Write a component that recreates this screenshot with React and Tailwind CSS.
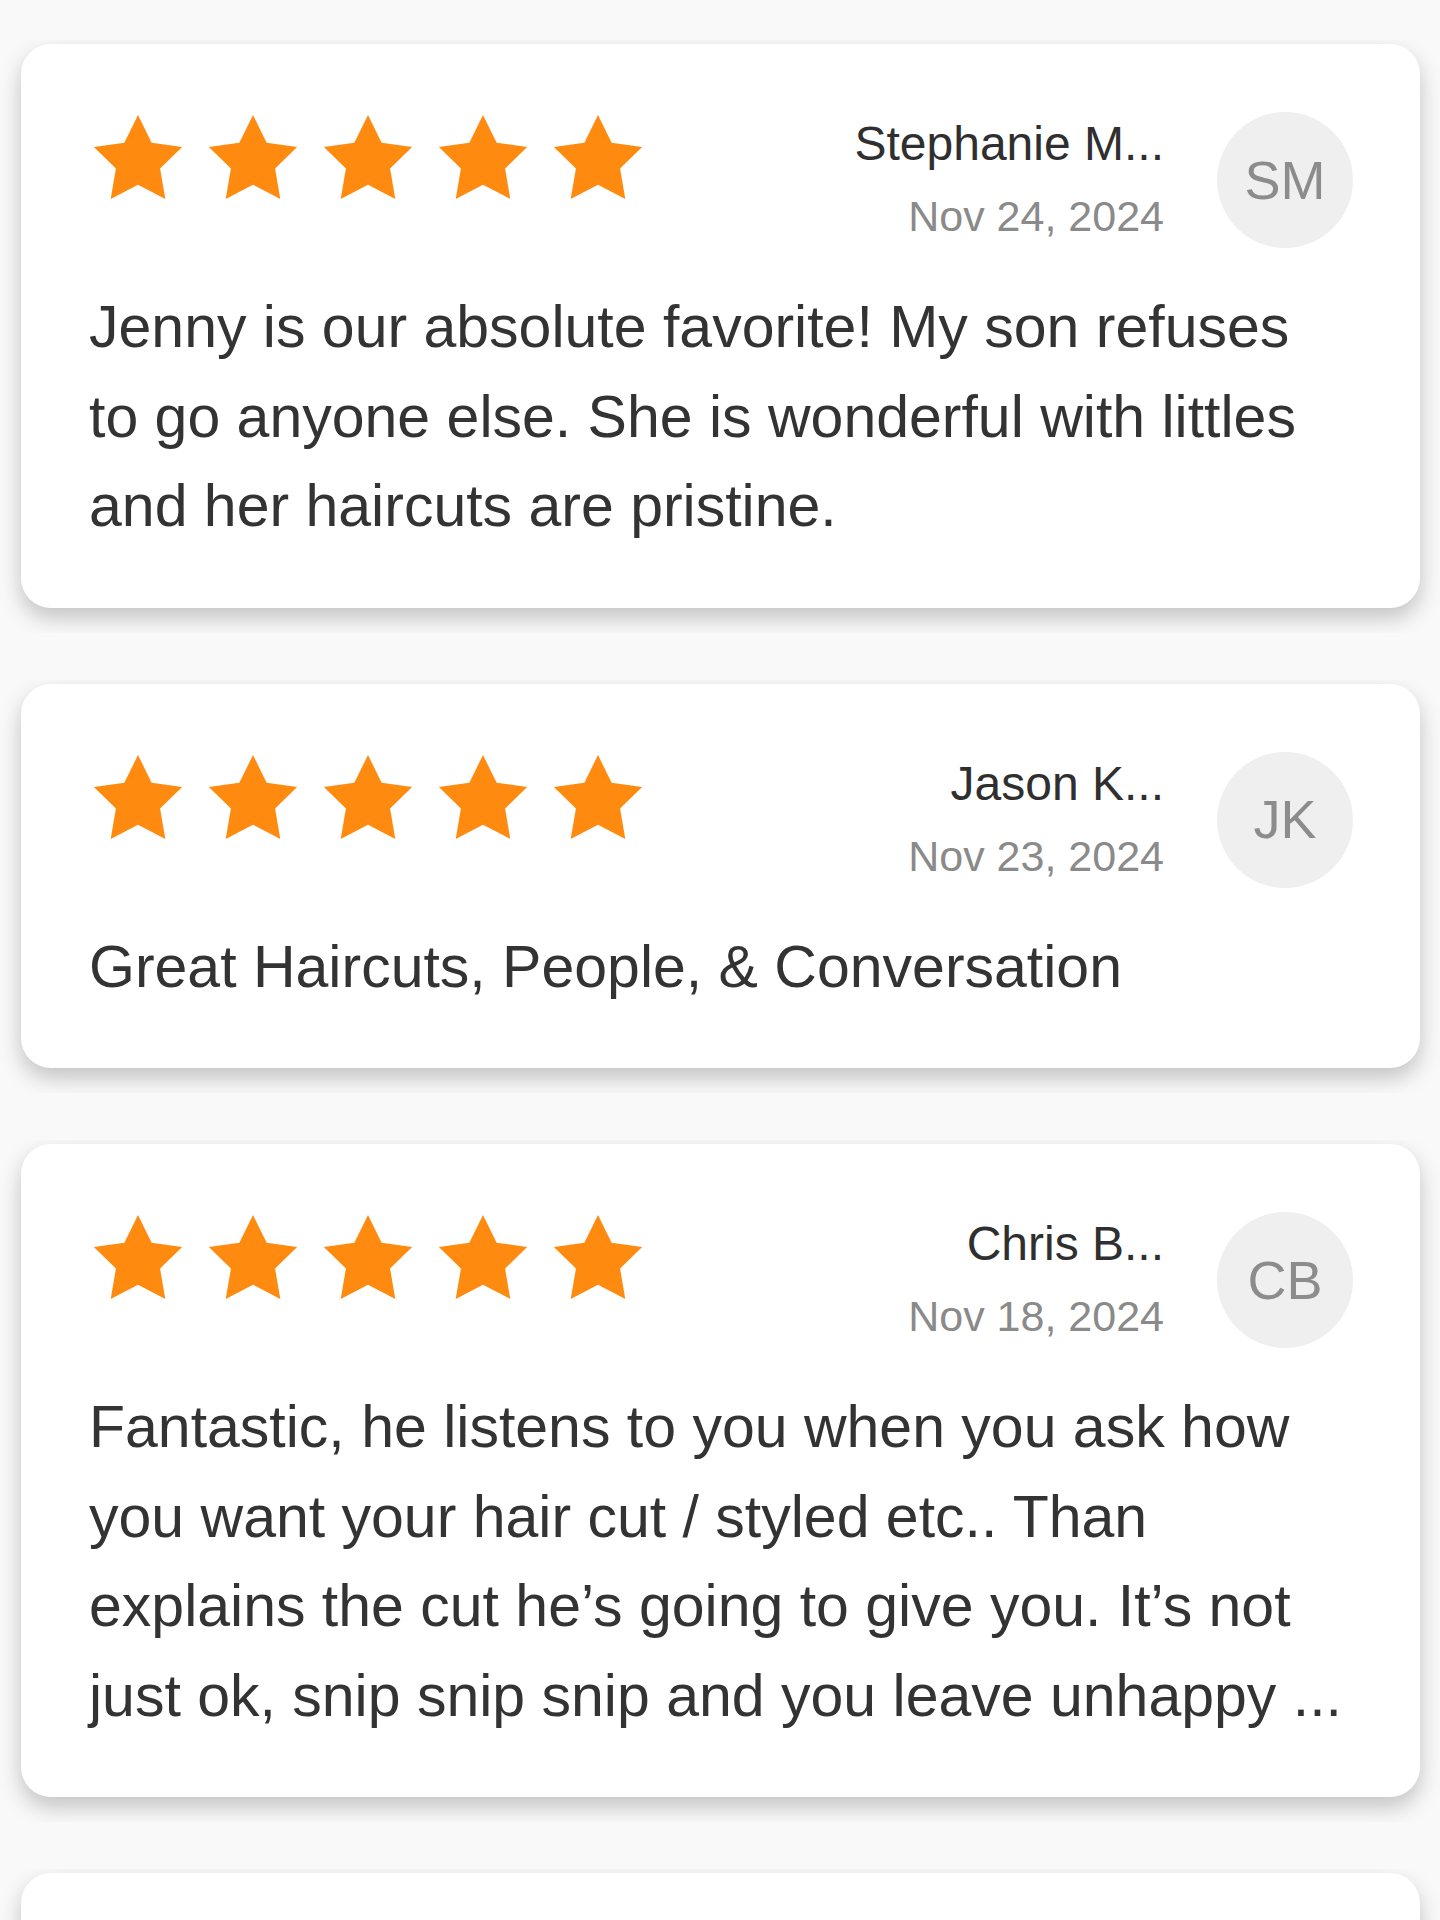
import React from "react";

const reviews = [
  {
    name: "Stephanie M...",
    initials: "SM",
    date: "Nov 24, 2024",
    text: "Jenny is our absolute favorite! My son refuses to go anyone else. She is wonderful with littles and her haircuts are pristine.",
  },
  {
    name: "Jason K...",
    initials: "JK",
    date: "Nov 23, 2024",
    text: "Great Haircuts, People, & Conversation",
  },
  {
    name: "Chris B...",
    initials: "CB",
    date: "Nov 18, 2024",
    text: "Fantastic, he listens to you when you ask how you want your hair cut / styled etc.. Than explains the cut he’s going to give you. It’s not just ok, snip snip snip and you leave unhappy ...",
  },
  {
    name: "Maria L...",
    initials: "ML",
    date: "Nov 15, 2024",
    text: "Always a great experience.",
  },
];

function Star() {
  return (
    <svg
      viewBox="2 2 20 19.02"
      className="w-[90px] h-[84px]"
      fill="#ff8a10"
      aria-hidden="true"
    >
      <polygon points="12 2 15.09 8.26 22 9.27 17 14.14 18.18 21.02 12 17.77 5.82 21.02 7 14.14 2 9.27 8.91 8.26" />
    </svg>
  );
}

function ReviewCard({ review }) {
  return (
    <div className="overflow-hidden pt-[4px] pb-[25px] pl-[21px] pr-[20px]">
      <div className="bg-white rounded-[30px] shadow-[0_10px_22px_rgba(0,0,0,0.22)] pl-[68px] pr-[67px] pt-[68px] pb-[56px]">
        {/* stars + reviewer */}
        <div className="flex justify-between items-start">
          <div className="flex gap-[25px] ml-[4px] mt-[3px]">
            {[0, 1, 2, 3, 4].map((i) => (
              <Star key={i} />
            ))}
          </div>
          <div className="flex items-center gap-[53px]">
            <div className="text-right">
              <div className="text-[48px] leading-[56px] text-[#2f2f2f]">
                {review.name}
              </div>
              <div className="mt-[16px] text-[43px] leading-[56px] text-[#8a8a8a]">
                {review.date}
              </div>
            </div>
            <div className="w-[136px] h-[136px] rounded-full bg-[#efefef] flex items-center justify-center text-[54px] text-[#8c8c8c]">
              {review.initials}
            </div>
          </div>
        </div>

        <p className="mt-[35px] pr-[4px] text-[59px] leading-[89.5px] text-[#333333]">
          {review.text}
        </p>
      </div>
    </div>
  );
}

export default function App() {
  return (
    <div
      className="h-[1920px] overflow-hidden bg-[#f9f9f9] pt-[40px]"
      style={{ fontFamily: '"Liberation Sans", Arial, sans-serif' }}
    >
      <div className="flex flex-col gap-[47px]">
        {reviews.map((r) => (
          <ReviewCard key={r.initials} review={r} />
        ))}
      </div>
    </div>
  );
}
